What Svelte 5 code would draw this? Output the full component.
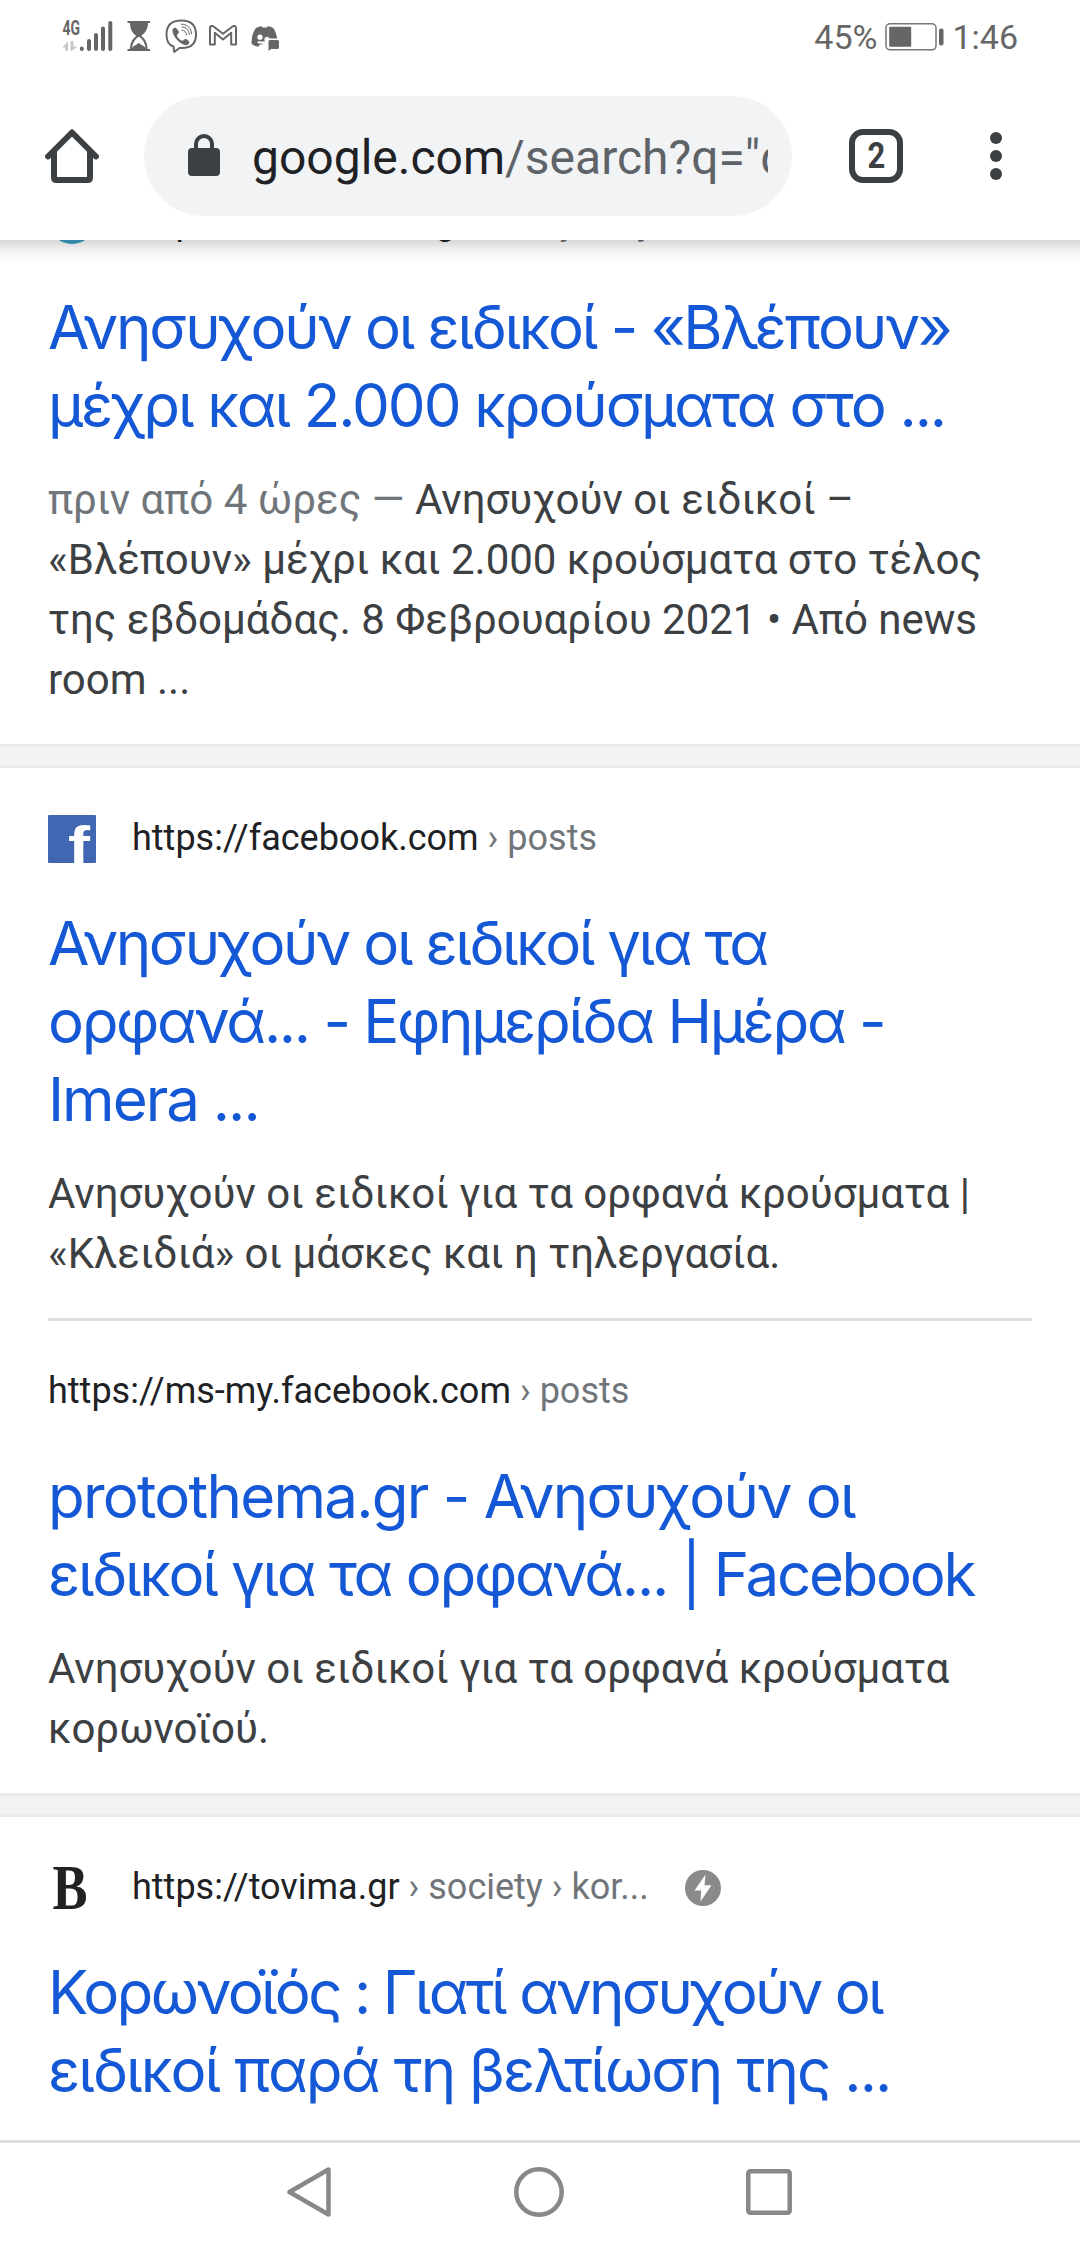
<script>
  // tracking keeps each headline line at its own width, in px
  const groups = [
    [
      {
        icon: 'globe',
        host: 'https://newsbomb.gr',
        path: ' › story › my',
        title: [
          { text: 'Ανησυχούν οι ειδικοί - «Βλέπουν»', tracking: -2.26 },
          { text: 'μέχρι και 2.000 κρούσματα στο ...', tracking: -2.06 }
        ],
        date: 'πριν από 4 ώρες — ',
        snippet: [
          'Ανησυχούν οι ειδικοί –',
          '«Βλέπουν» μέχρι και 2.000 κρούσματα στο τέλος',
          'της εβδομάδας. 8 Φεβρουαρίου 2021 • Από news',
          'room ...'
        ]
      }
    ],
    [
      {
        icon: 'facebook',
        host: 'https://facebook.com',
        path: ' › posts',
        title: [
          { text: 'Ανησυχούν οι ειδικοί για τα', tracking: -2.42 },
          { text: 'ορφανά... - Εφημερίδα Ημέρα -', tracking: -2.3 },
          { text: 'Imera ...', tracking: -2 }
        ],
        snippet: [
          'Ανησυχούν οι ειδικοί για τα ορφανά κρούσματα |',
          '«Κλειδιά» οι μάσκες και η τηλεργασία.'
        ]
      },
      {
        host: 'https://ms-my.facebook.com',
        path: ' › posts',
        title: [
          { text: 'protothema.gr - Ανησυχούν οι', tracking: -1.75 },
          { text: 'ειδικοί για τα ορφανά... | Facebook', tracking: -2.27 }
        ],
        snippet: ['Ανησυχούν οι ειδικοί για τα ορφανά κρούσματα', 'κορωνοϊού.']
      }
    ],
    [
      {
        icon: 'tovima',
        host: 'https://tovima.gr',
        path: ' › society › kor...',
        amp: true,
        title: [
          { text: 'Κορωνοϊός : Γιατί ανησυχούν οι', tracking: -2.66 },
          { text: 'ειδικοί παρά τη βελτίωση της ...', tracking: -1.89 }
        ],
        snippet: []
      }
    ]
  ];
</script>

<div class="screen">
  <header class="status">
    <svg class="status__left" width="220" height="40" viewBox="60 16 220 40" aria-hidden="true">
      <text x="62.5" y="35" class="status__net" textLength="17.5" lengthAdjust="spacingAndGlyphs">4G</text>
      <g fill="#c8c8c8">
        <path d="M62.500 47.500 68 41v9.800h-3v-3.300z" />
        <path d="M70.500 41h3v5.800h4L71.500 51h-1z" />
      </g>
      <g stroke="#666" stroke-width="4" stroke-linecap="round">
        <path d="M81.800 48.500v.5M89 41v8M96 35v14M103 28.500V49M110.300 23v26" />
      </g>
      <g fill="#666">
        <path d="M127.500 21H150v2h-2c0 7-3.500 10-6.800 13-1.400 1.300-3.600 1.300-5 0-3.300-3-6.200-6-6.200-13h-2.500z" />
        <path d="M127.500 49H150v2h-22.500z" />
        <path d="M131.500 49.500c.5-3 4-4 7.300-6.500 3.200 2.500 6.700 3.500 7.200 6.500z" />
      </g>
      <path d="M131 49c0-7 3-10 7.800-14 4.800 4 7.700 7 7.700 14" fill="none" stroke="#666" stroke-width="2.200" />
      <path
        d="M173.500 46.500c-4-1.200-7-4.500-7-11.800 0-9.700 4.500-14.200 14.700-14.200S196 25 196 34.500 191.500 48 182 48h-2.500l-5.300 4z"
        fill="none" stroke="#666" stroke-width="2" stroke-linejoin="round" />
      <path
        d="M175 27.500c1 0 4 3.500 4 4.800s-2 1.800-2 3c0 2 3.500 5.500 5.500 5.500 1.200 0 1.700-1.700 3-1.700 1 0 3.800 2 3.800 3.200 0 1.200-1.600 3-3.300 3-4.800 0-13.500-8.500-13.500-14.500 0-1.700 1.300-3.300 2.500-3.300z"
        fill="#666" />
      <path d="M181.500 30.500c3 0 5 2 5 5M181.500 27.300c5 0 7.700 3.200 7.700 8M181 24.500c6.500 0 10.500 4 10.500 10" transform="translate(0 -.3)" fill="none" stroke="#666" stroke-width="1" />
      <path
        d="M210 44.500V28.200c0-2.500 2.300-2.700 3.500-1.700l9.500 7.300 9.500-7.300c1.200-1 3.500-.8 3.500 1.700v16.300h-4.800V32.800L223 39.500l-8.200-6.700v11.700z"
        fill="none" stroke="#666" stroke-width="2" stroke-linejoin="round" />
      <path
        d="M256 28c2-1 4-1.500 5.700-1.700l.8 1.200h4.200l.8-1.200c2 .2 4 .8 5.700 1.700 2.200 3 3.500 6.500 3.800 10.500h-7.500a2.700 2.700 0 0 0-5 0c-.3 1.300 0 2.500.5 3h-4.200l-2.500-.5c-.5 1-.8 1.800-.5 2.200l5 .5v.8h-3l-1.300 2.300c-3-.3-5.300-1.300-7-3 0-6.500 1.200-11.500 4.500-15.800z"
        fill="#666" />
      <circle cx="260" cy="37.200" r="2.600" fill="#fff" />
      <path d="M269.500 40h7.800q1.700 0 1.700 1.500v6q0 1.500-1.700 1.500H271l-2.500 2v-9.500q0-1.500 1-1.500z" fill="#666" />
    </svg>
    <div class="status__right">
      <span>45%</span>
      <svg width="59" height="30" viewBox="0 0 59 30" aria-hidden="true">
        <rect x="1" y="1.800" width="50" height="26" rx="4" fill="none" stroke="#777" stroke-width="1.500" />
        <rect x="4.200" y="4.800" width="22" height="20" rx="1" fill="#666" />
        <rect x="54" y="6.500" width="4.500" height="17" rx="2" fill="#666" />
      </svg>
      <span>1:46</span>
    </div>
  </header>

  <div class="toolbar">
    <svg class="toolbar__home" width="54" height="54" viewBox="0 0 54 54" aria-hidden="true">
      <path d="M3 27.500 27 3.500l24 24M9 22v26.500q0 2.500 2.500 2.500h31q2.500 0 2.500-2.500V22" fill="none" stroke="#3c4043" stroke-width="6" stroke-linecap="round" stroke-linejoin="round" />
    </svg>
    <div class="omnibox">
      <svg width="32" height="42" viewBox="0 0 32 42" aria-hidden="true">
        <rect y="14" width="32" height="28" rx="4" fill="#3c4043" />
        <path d="M8 15V10a8 8 0 0 1 16 0v5" fill="none" stroke="#3c4043" stroke-width="4" />
      </svg>
      <div class="omnibox__url">google.com<span>/search?q="α</span></div>
    </div>
    <div class="toolbar__tabs"><span>2</span></div>
    <svg class="toolbar__menu" width="12" height="48" viewBox="0 0 12 48" aria-hidden="true">
      <circle cx="6" cy="6" r="6" />
      <circle cx="6" cy="24" r="6" />
      <circle cx="6" cy="42" r="6" />
    </svg>
  </div>

  <main class="results">
    {#each groups as group}
      <section class="group">
        {#each group as result}
          <article class="result">
            <div class="source">
              {#if result.icon === 'facebook'}
                <svg class="source__icon" width="48" height="48" viewBox="0 0 48 48" aria-hidden="true">
                  <rect width="48" height="48" rx="1" fill="#4267b2" />
                  <text x="20" y="49" class="source__f" textLength="22" lengthAdjust="spacingAndGlyphs">f</text>
                </svg>
              {:else if result.icon === 'tovima'}
                <svg class="source__icon" width="48" height="48" viewBox="0 0 48 48" aria-hidden="true">
                  <text x="4.500" y="44.500" class="source__b" textLength="35" lengthAdjust="spacingAndGlyphs">B</text>
                </svg>
              {:else if result.icon === 'globe'}
                <svg class="source__icon" width="48" height="48" viewBox="0 0 48 48" aria-hidden="true">
                  <circle cx="24" cy="22" r="23" fill="#3a9cc4" />
                </svg>
              {/if}
              <span class="source__url">{result.host}<span class="source__path">{result.path}</span></span>
              {#if result.amp}
                <svg class="source__amp" width="36" height="36" viewBox="0 0 36 36" aria-hidden="true">
                  <circle cx="18" cy="18" r="18" fill="#8a8a8a" />
                  <path d="M20.500 4.500 9.500 20.500h6.700L15.500 31.500 26.500 15.300h-7z" fill="#fff" />
                </svg>
              {/if}
            </div>
            <h3 class="title">
              {#each result.title as line}
                <span class="line" style:letter-spacing="{line.tracking}px">{line.text}</span>
              {/each}
            </h3>
            {#if result.snippet.length}
              <p class="snippet">
                {#each result.snippet as line, i}
                  <span class="line">{#if i === 0 && result.date}<span class="snippet__date">{result.date}</span>{/if}{line}</span>
                {/each}
              </p>
            {/if}
          </article>
        {/each}
      </section>
    {/each}
  </main>

  <nav class="navbar" aria-label="System">
    <svg width="44" height="50" viewBox="0 0 44 50"><path d="M41.500 2.500v45L2.500 25z" /></svg>
    <svg width="50" height="50" viewBox="0 0 50 50"><circle cx="25" cy="25" r="22.700" /></svg>
    <svg width="46" height="46" viewBox="0 0 46 46"><rect x="2.300" y="2.300" width="41.400" height="41.400" rx="2" /></svg>
  </nav>
</div>

<style>
  :global(body) {
    margin: 0;
    background: #fff;
  }

  .screen {
    width: 1080px;
    height: 2244px;
    display: flex;
    flex-direction: column;
    overflow: hidden;
    background: #fff;
    font-family: Roboto, 'Noto Sans', sans-serif;
  }

  .status {
    height: 72px;
    flex: none;
    box-sizing: border-box;
    padding: 0 62px 0 60px;
    display: flex;
    justify-content: space-between;
    align-items: center;
    color: #666;
  }

  .status__net {
    font: 700 20px Roboto, sans-serif;
    fill: #666;
  }

  .status__right {
    display: flex;
    align-items: center;
    gap: 8px;
    padding-top: 2px;
    font-size: 34px;
    line-height: 40px;
  }

  .toolbar {
    height: 168px;
    flex: none;
    box-sizing: border-box;
    padding: 0 78px 0 45px;
    display: flex;
    align-items: center;
    background: #fff;
    position: relative;
    z-index: 1;
  }

  /* shadow strip over the scrolled results */
  .toolbar::after {
    content: '';
    position: absolute;
    top: 100%;
    left: 0;
    right: 0;
    height: 22px;
    background: linear-gradient(rgba(0, 0, 0, 0.16), rgba(0, 0, 0, 0.06) 45%, rgba(0, 0, 0, 0));
  }

  .omnibox {
    width: 648px;
    height: 120px;
    margin-left: 45px;
    box-sizing: border-box;
    padding: 0 24px 0 44px;
    border-radius: 60px;
    background: #f1f3f4;
    display: flex;
    align-items: center;
    gap: 32px;
  }

  .omnibox svg {
    flex: none;
    margin-bottom: 2px;
  }

  .omnibox__url {
    flex: 1;
    overflow: hidden;
    white-space: nowrap;
    font-size: 48px;
    line-height: 60px;
    padding-top: 3px;
    color: #202124;
  }

  .omnibox__url span {
    color: #5f6368;
  }

  .toolbar__tabs {
    width: 54px;
    height: 54px;
    margin-left: 57px;
    box-sizing: border-box;
    border: 6px solid #3c4043;
    border-radius: 14px;
    display: flex;
    align-items: center;
    justify-content: center;
    font-size: 36px;
    font-weight: 700;
    line-height: 42px;
    color: #3c4043;
  }

  .toolbar__tabs span {
    transform: scaleX(0.86);
  }

  .toolbar__menu {
    margin-left: 87px;
    fill: #3c4043;
  }

  .results {
    flex: 1;
    min-height: 0;
    overflow: hidden;
  }

  .group {
    padding: 47px 48px 34px;
  }

  .group:first-child {
    padding-top: 0;
    margin-top: -41px;
  }

  .group + .group {
    border-top: 3px solid #ebebeb;
    box-shadow: inset 0 18px #f1f2f4, inset 0 21px #ebebec;
    padding-top: 68px;
  }

  .result + .result {
    margin-top: 34px;
    padding-top: 47px;
    border-top: 3px solid #dfe0e4;
  }

  .source {
    height: 48px;
    display: flex;
    align-items: center;
  }

  .source__icon {
    margin-right: 36px;
  }

  .source__url {
    font-size: 36px;
    line-height: 42px;
    white-space: pre;
    color: #202124;
    padding-bottom: 2px;
  }

  .source__path {
    color: #70757a;
  }

  .source__amp {
    margin-left: 36px;
  }

  .source__f {
    font: 700 54px 'Liberation Sans', sans-serif;
    fill: #fff;
  }

  .source__b {
    font: 700 64px 'Liberation Serif', serif;
    fill: #222;
  }

  .title {
    margin: 41px 0 0;
    font: 400 60px/78px Inter, sans-serif;
    color: #1558d6;
  }

  .line {
    display: block;
    white-space: pre;
  }

  .snippet {
    margin: 26px 0 0;
    font-size: 42px;
    line-height: 60px;
    color: #3c4043;
  }

  .snippet__date {
    color: #70757a;
  }

  .navbar {
    height: 104px;
    flex: none;
    box-sizing: border-box;
    border-top: 3px solid #dcdde0;
    padding: 0 288px 4px 287px;
    display: flex;
    align-items: center;
    justify-content: space-between;
  }

  .navbar svg {
    fill: none;
    stroke: #888;
    stroke-width: 4.5;
    stroke-linejoin: round;
  }
</style>
